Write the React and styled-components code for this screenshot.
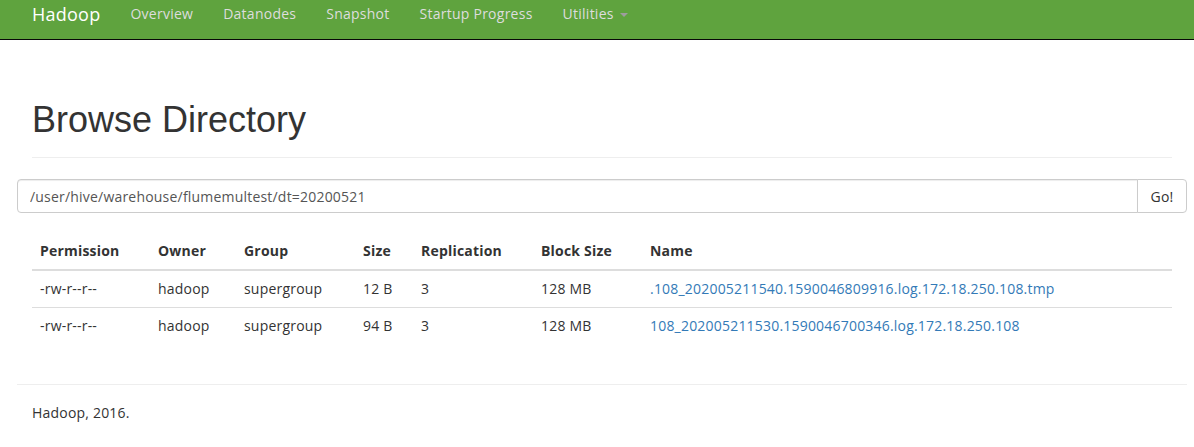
import React from 'react'
import styled, { createGlobalStyle } from 'styled-components'

const GlobalStyle = createGlobalStyle`
    body {
        margin: 0;
        background: #fff;
        color: #333;
        font-family: "Open Sans", "Noto Sans", sans-serif;
        font-size: 14px;
        line-height: 20px;
        letter-spacing: 0.2px;
    }
`;

const navItems = ['Overview', 'Datanodes', 'Snapshot', 'Startup Progress']

const files = [
    { perm: '-rw-r--r--', owner: 'hadoop', group: 'supergroup', size: '12 B', repl: '3', block: '128 MB', name: '.108_202005211540.1590046809916.log.172.18.250.108.tmp' },
    { perm: '-rw-r--r--', owner: 'hadoop', group: 'supergroup', size: '94 B', repl: '3', block: '128 MB', name: '108_202005211530.1590046700346.log.172.18.250.108' },
]

const columns = [
    { label: 'Permission', width: 118 },
    { label: 'Owner', width: 86 },
    { label: 'Group', width: 119 },
    { label: 'Size', width: 58 },
    { label: 'Replication', width: 120 },
    { label: 'Block Size', width: 109 },
    { label: 'Name', width: 530 },
]

function App() {
    return <>
        <GlobalStyle />
        <Navbar>
            <NavInner>
                <Brand href="#">Hadoop</Brand>
                {navItems.map(item => <NavLink key={item} href="#">{item}</NavLink>)}
                <NavLink href="#">Utilities <Caret /></NavLink>
            </NavInner>
        </Navbar>
        <Container>
            <PageHeader>
                <Title>Browse Directory</Title>
            </PageHeader>
            <InputGroup>
                <PathInput type="text" defaultValue="/user/hive/warehouse/flumemultest/dt=20200521" />
                <GoButton>Go!</GoButton>
            </InputGroup>
            <Table>
                <colgroup>
                    {columns.map(c => <Col key={c.label} $width={c.width} />)}
                </colgroup>
                <thead>
                    <tr>
                        {columns.map(c => <Th key={c.label}>{c.label}</Th>)}
                    </tr>
                </thead>
                <tbody>
                    {files.map(f => <tr key={f.name}>
                        <Td>{f.perm}</Td>
                        <Td>{f.owner}</Td>
                        <Td>{f.group}</Td>
                        <Td>{f.size}</Td>
                        <Td>{f.repl}</Td>
                        <Td>{f.block}</Td>
                        <Td><FileLink href="#">{f.name}</FileLink></Td>
                    </tr>)}
                </tbody>
            </Table>
            <Footer>
                <p>Hadoop, 2016.</p>
            </Footer>
        </Container>
    </>
}

const Navbar = styled.nav`
    height: 39px;
    background-color: #5fa33e;
    border-bottom: 1px solid #080808;
`;

const NavInner = styled.div`
    display: flex;
    align-items: flex-start;
    width: 1140px;
    margin-left: 17px;
    padding: 0 15px;
    letter-spacing: 0.25px;
`;

const Brand = styled.a`
    margin-left: -15px;
    padding: 4px 15px;
    font-size: 18px;
    line-height: 20px;
    color: #fff;
    text-decoration: none;
`;

const NavLink = styled.a`
    display: flex;
    align-items: center;
    padding: 4px 15px;
    line-height: 20px;
    color: #ddd;
    text-decoration: none;
`;

const Caret = styled.span`
    display: inline-block;
    width: 0;
    height: 0;
    margin-left: 6px;
    margin-top: 2px;
    border-top: 4px solid #9d9d9d;
    border-left: 4px solid transparent;
    border-right: 4px solid transparent;
`;

const Container = styled.div`
    width: 1170px;
    margin-left: 17px;
`;

const PageHeader = styled.div`
    margin: 60px 15px 0;
    padding-bottom: 17px;
    border-bottom: 1px solid #eee;
`;

const Title = styled.h1`
    margin: 0;
    font-family: "Liberation Sans", Arial, sans-serif;
    font-size: 36px;
    font-weight: 500;
    line-height: 40px;
    letter-spacing: 0;
    color: #333;
`;

const InputGroup = styled.div`
    display: flex;
    margin-top: 21px;
    height: 34px;
`;

const PathInput = styled.input`
    flex: 1;
    box-sizing: border-box;
    height: 34px;
    padding: 6px 12px;
    border: 1px solid #ccc;
    border-radius: 4px 0 0 4px;
    box-shadow: inset 0 1px 1px rgba(0, 0, 0, .075);
    font-family: inherit;
    font-size: 14px;
    letter-spacing: inherit;
    color: #555;
    outline: none;
`;

const GoButton = styled.button`
    box-sizing: border-box;
    width: 50px;
    height: 34px;
    margin-left: -1px;
    padding: 6px 0;
    background: #fff;
    border: 1px solid #ccc;
    border-radius: 0 4px 4px 0;
    font-family: inherit;
    font-size: 14px;
    letter-spacing: inherit;
    color: #333;
`;

const Table = styled.table`
    width: 1140px;
    margin: 20px 15px 40px;
    table-layout: fixed;
    border-collapse: collapse;
    border-spacing: 0;
`;

const Col = styled.col`
    width: ${p => p.$width}px;
`;

const Th = styled.th`
    padding: 8px;
    text-align: left;
    vertical-align: bottom;
    font-weight: 700;
    border-bottom: 2px solid #ddd;
`;

const Td = styled.td`
    padding: 8px;
    border-top: 1px solid #ddd;
    vertical-align: top;
    white-space: nowrap;
`;

const FileLink = styled.a`
    color: #337ab7;
    text-decoration: none;
`;

const Footer = styled.footer`
    border-top: 1px solid #eee;
    padding: 0 15px;
    p {
        margin: 18px 0 0;
    }
`;

export default App
